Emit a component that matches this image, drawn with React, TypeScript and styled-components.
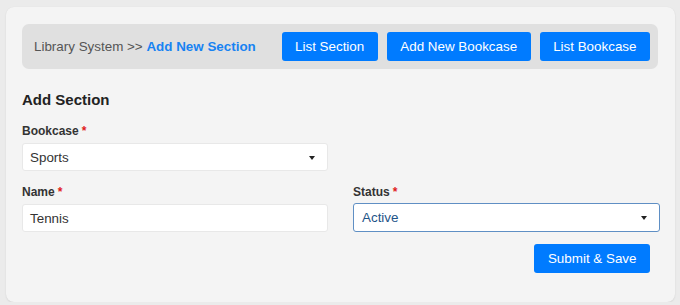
import React from "react";
import styled, { createGlobalStyle } from "styled-components";

const Global = createGlobalStyle`
  html, body { margin: 0; padding: 0; background: #ebebeb; }
  body { font-family: "Liberation Sans", Arial, Helvetica, sans-serif; }
  * { box-sizing: border-box; }
`;

const Card = styled.div`
  margin: 7px 0 0 6px;
  width: 669px;
  height: 295px;
  background: #f4f4f4;
  border-radius: 8px;
  box-shadow: 0 1px 2px rgba(0, 0, 0, 0.08), 0 0 1px rgba(0, 0, 0, 0.06);
  padding: 17px 17px 0 16px;
`;

const Bar = styled.div`
  display: flex;
  align-items: center;
  justify-content: space-between;
  height: 45px;
  background: #e0e0e0;
  border-radius: 7px;
  padding: 0 8px 0 12px;
`;

const Crumbs = styled.div`
  font-size: 13.4px;
  color: #555;
  white-space: nowrap;
`;

const Current = styled.span`
  color: #1883f2;
  font-weight: bold;
`;

const Actions = styled.div`
  display: flex;
  gap: 9px;
`;

const Button = styled.button`
  font-family: inherit;
  font-size: 13.4px;
  line-height: 15px;
  height: 29px;
  padding: 0 13.5px;
  border: none;
  border-radius: 3px;
  background: #007bff;
  color: #fff;
  cursor: pointer;
`;

const Heading = styled.h2`
  margin: 22px 0 0;
  font-size: 15px;
  line-height: 18px;
  font-weight: bold;
  color: #222;
`;

const Grid = styled.div`
  margin-top: 15px;
  display: grid;
  grid-template-columns: 306px 307px;
  column-gap: 25px;
  row-gap: 14px;
  width: 638px;
`;

const Field = styled.div`
  display: flex;
  flex-direction: column;
  gap: 5px;
`;

const Label = styled.label`
  font-size: 12px;
  line-height: 14px;
  font-weight: bold;
  color: #333;
`;

const Req = styled.span`
  color: #e0201b;
  margin-left: 3px;
`;

const Box = styled.div<{ $focus?: boolean; $h?: number }>`
  height: ${(p) => p.$h ?? 28}px;
  display: flex;
  align-items: center;
  justify-content: space-between;
  background: #fff;
  border: 1px solid ${(p) => (p.$focus ? "#5f8fc4" : "#e8e8e8")};
  border-radius: 3px;
  padding: 0 12px 0 ${(p) => (p.$focus ? 8 : 7)}px;
  font-size: 13.4px;
  color: ${(p) => (p.$focus ? "#1f5488" : "#333")};
`;

const Caret = styled.span`
  width: 0;
  height: 0;
  border-left: 3.5px solid transparent;
  border-right: 3.5px solid transparent;
  border-top: 4px solid #222;
  margin-top: 1px;
`;

const Footer = styled.div`
  display: flex;
  justify-content: flex-end;
  width: 638px;
  padding-right: 10px;
  margin-top: 12px;
`;

export default function App() {
  return (
    <>
      <Global />
      <Card>
        <Bar>
          <Crumbs>
            Library System &gt;&gt; <Current>Add New Section</Current>
          </Crumbs>
          <Actions>
            <Button>List Section</Button>
            <Button>Add New Bookcase</Button>
            <Button>List Bookcase</Button>
          </Actions>
        </Bar>
        <Heading>Add Section</Heading>
        <Grid>
          <Field>
            <Label>
              Bookcase<Req>*</Req>
            </Label>
            <Box>
              Sports
              <Caret />
            </Box>
          </Field>
          <div />
          <Field>
            <Label>
              Name<Req>*</Req>
            </Label>
            <Box>Tennis</Box>
          </Field>
          <Field>
            <Label>
              Status<Req>*</Req>
            </Label>
            <Box $focus $h={29} style={{ marginTop: -1 }}>
              Active
              <Caret />
            </Box>
          </Field>
        </Grid>
        <Footer>
          <Button>Submit &amp; Save</Button>
        </Footer>
      </Card>
    </>
  );
}
